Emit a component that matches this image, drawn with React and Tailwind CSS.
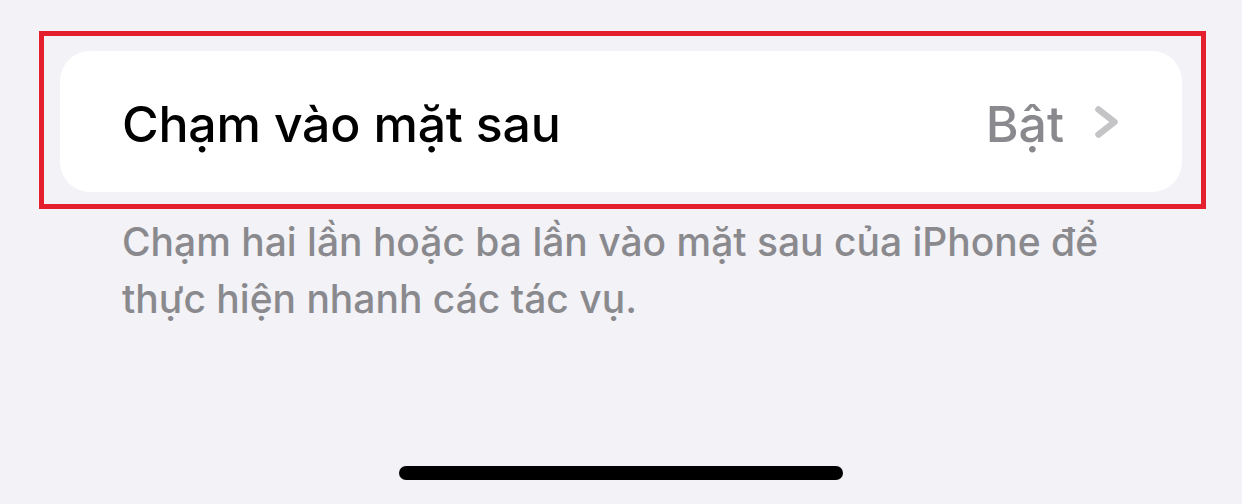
export default function App() {
  return (
    <div
      className="w-[1242px] h-[504px] bg-[#f2f2f7] flex flex-col overflow-hidden"
      style={{ fontFamily: 'Inter, "Noto Sans", sans-serif' }}
    >
      <div className="ml-[39px] mt-[31px] w-[1167px] border-[5px] border-[#e5202e] pt-[15px] pl-[16px] pr-[19px] pb-[12px]">
        <div className="h-[141px] rounded-[30px] bg-white flex items-center justify-between pl-[62px] pr-[62px] pt-[5px]">
          <span className="text-[50px] font-medium text-black tracking-[-0.2px]">
            Chạm vào mặt sau
          </span>
          <div className="flex items-center gap-[30px]">
            <span className="text-[50px] font-medium text-[#8a8a8e]">Bật</span>
            <svg width="26" height="34" viewBox="0 0 26 34" fill="none" className="-mt-[4px]">
              <path
                d="M4.5 4.5 L20.5 17 L4.5 29.5"
                stroke="#c4c4c7"
                strokeWidth="6.5"
                strokeLinecap="round"
                strokeLinejoin="round"
              />
            </svg>
          </div>
        </div>
      </div>
      <p className="ml-[122px] mt-[4px] w-[1060px] text-[39px] leading-[57px] font-medium text-[#8a8a8e]">
        Chạm hai lần hoặc ba lần vào mặt sau của iPhone để thực hiện nhanh các tác vụ.
      </p>
      <div className="flex-1" />
      <div className="mx-auto mb-[24px] w-[444px] h-[14px] rounded-full bg-black" />
    </div>
  );
}
